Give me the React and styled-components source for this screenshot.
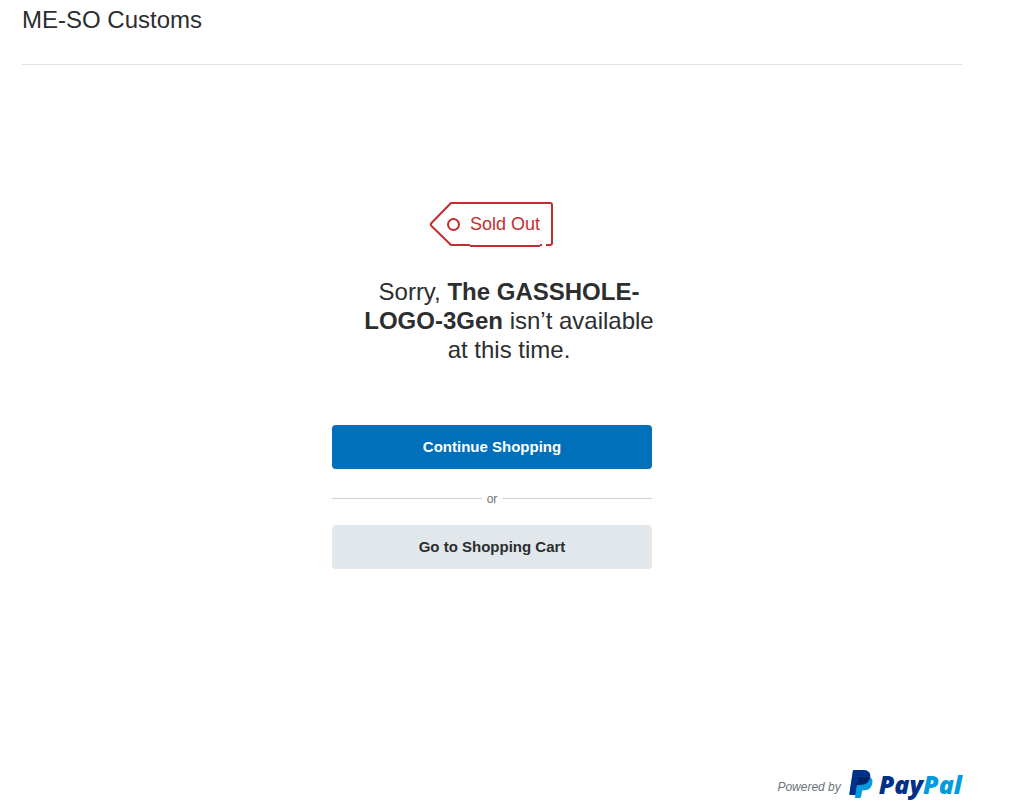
import React from 'react';
import styled, { createGlobalStyle } from 'styled-components';

const texts = {
  shop: 'ME-SO Customs',
  soldOut: 'Sold Out',
  item: 'The GASSHOLE-LOGO-3Gen',
  continueShopping: 'Continue Shopping',
  or: 'or',
  cart: 'Go to Shopping Cart',
  poweredBy: 'Powered by',
};

const GlobalStyle = createGlobalStyle`
  body {
    margin: 0;
    background: #fff;
    color: #2c2e2f;
    font-family: 'Liberation Sans', Arial, sans-serif;
  }
`;

const Page = styled.div`
  display: flex;
  flex-direction: column;
  box-sizing: border-box;
  min-height: 100vh;
  padding: 0 47px 12px 22px;
`;

const Header = styled.header`
  padding: 5px 0 30px;
  border-bottom: 1px solid #e1e1e1;
`;

const ShopName = styled.h1`
  margin: 0;
  font-size: 24px;
  font-weight: normal;
  line-height: 29px;
`;

const Content = styled.main`
  display: flex;
  flex: 1;
  flex-direction: column;
  align-items: center;
  padding: 136px 0 40px;
`;

const Tag = styled.div`
  position: relative;
  box-sizing: border-box;
  width: 126px;
  height: 47px;
  padding-left: 41px;
  color: #c12e2e;
  font-size: 18px;
  line-height: 47px;
`;

const TagOutline = styled.svg`
  position: absolute;
  top: 0;
  left: 0;
  fill: none;
  stroke: currentColor;
  stroke-width: 2;
  stroke-linejoin: round;
`;

const Message = styled.p`
  width: 300px;
  margin: 29px 0 61px;
  padding-left: 34px;
  font-size: 24px;
  line-height: 29px;
  text-align: center;
`;

const Actions = styled.div`
  display: flex;
  flex-direction: column;
  width: 320px;
`;

const Button = styled.button`
  height: 44px;
  padding: 0 16px 2px;
  border: 0;
  border-radius: 4px;
  background: ${({ $secondary }) => ($secondary ? '#e1e7eb' : '#0070ba')};
  color: ${({ $secondary }) => ($secondary ? '#2c2e2f' : '#fff')};
  font-family: inherit;
  font-size: 15px;
  font-weight: bold;
  cursor: pointer;
`;

const Divider = styled.div`
  display: flex;
  align-items: center;
  gap: 5px;
  height: 56px;
  padding-top: 3px;
  box-sizing: border-box;
  color: #6c7378;
  font-size: 12px;

  &::before,
  &::after {
    content: '';
    flex: 1;
    height: 1px;
    background: #d2d2d2;
  }
`;

const Footer = styled.footer`
  display: flex;
  align-items: center;
  justify-content: flex-end;
  color: #6c7378;
  font-size: 12px;
  font-style: italic;
`;

const PoweredBy = styled.span`
  padding-top: 5px;
`;

const Monogram = styled.svg`
  margin: 0 6px 0 8px;
`;

const Wordmark = styled.span`
  color: #003087;
  font-family: 'Open Sans', sans-serif;
  font-size: 25px;
  font-weight: 800;
  line-height: 28px;
`;

const WordmarkEnd = styled.span`
  color: #009cde;
`;

const SoldOutTag = () => (
  <Tag>
    <TagOutline width="126" height="47" viewBox="0 0 126 47" aria-hidden="true">
      <path d="M41 44H22L2.5 25Q1 23.5 2.5 22L22 2H121Q123 2 123 4V42Q123 44 121 44H117" />
      <path d="M41 45H111" />
      <path d="M111 44H113" />
      <circle cx="24.5" cy="23.5" r="5.5" />
    </TagOutline>
    {texts.soldOut}
  </Tag>
);

const PayPalLogo = () => (
  <>
    <Monogram width="24" height="28" viewBox="1 2.5 22.6 27.2" preserveAspectRatio="none" aria-hidden="true">
      <path
        fill="#009cde"
        d="M20.905 9.5C21.185 7.4 20.905 6 19.782 4.7C18.564 3.3 16.411 2.6 13.697 2.6H5.739C5.271 2.6 4.71 3.1 4.615 3.6L1.339 25.8C1.339 26.2 1.62 26.7 2.088 26.7H6.956L6.675 28.9C6.581 29.3 6.862 29.6 7.236 29.6H11.356C11.825 29.6 12.292 29.3 12.386 28.8V28.5L13.228 23.3V23.1C13.322 22.6 13.79 22.2 14.258 22.2H14.821C18.845 22.2 21.935 20.5 22.871 15.5C23.339 13.4 23.153 11.7 22.029 10.5C21.748 10.1 21.279 9.8 20.905 9.5Z"
      />
      <path
        fill="#012169"
        d="M20.905 9.5C20.3 9.1 18.753 8.6 16.692 8.6H10.513C10.046 8.6 9.577 9 9.485 9.5L8.174 17.8V18.1C8.268 17.6 8.736 17.1 9.298 17.1H11.637C16.224 17.1 19.782 15.2 20.811 9.9C20.811 9.8 20.811 9.7 20.905 9.5Z"
      />
      <path
        fill="#003087"
        d="M9.485 9.5C9.577 9 10.046 8.6 10.513 8.6H16.692C18.753 8.6 20.3 9.1 20.905 9.5C21.185 7.4 20.905 6 19.782 4.7C18.564 3.3 16.411 2.6 13.697 2.6H5.739C5.271 2.6 4.71 3.1 4.615 3.6L1.339 25.8C1.339 26.2 1.62 26.7 2.088 26.7H6.956L8.174 18.1Z"
      />
    </Monogram>
    <Wordmark>
      Pay<WordmarkEnd>Pal</WordmarkEnd>
    </Wordmark>
  </>
);

const App = () => {
  return (
    <>
      <GlobalStyle />
      <Page>
        <Header>
          <ShopName>{texts.shop}</ShopName>
        </Header>
        <Content>
          <SoldOutTag />
          <Message>
            Sorry, <strong>{texts.item}</strong> isn’t available at this time.
          </Message>
          <Actions>
            <Button type="button">{texts.continueShopping}</Button>
            <Divider>{texts.or}</Divider>
            <Button type="button" $secondary>
              {texts.cart}
            </Button>
          </Actions>
        </Content>
        <Footer>
          <PoweredBy>{texts.poweredBy}</PoweredBy>
          <PayPalLogo />
        </Footer>
      </Page>
    </>
  );
};

export default App;
